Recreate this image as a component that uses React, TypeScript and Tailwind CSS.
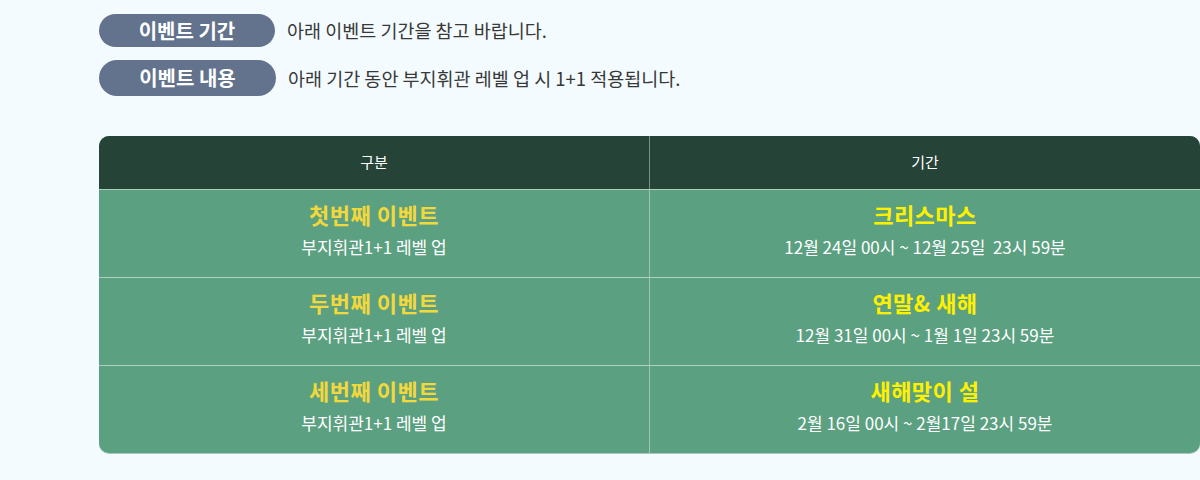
import React from "react";

const font = { fontFamily: '"Noto Sans CJK KR", "Noto Sans", sans-serif' };

const rows = [
  { l: "첫번째 이벤트", r: "크리스마스", d: "12월 24일 00시 ~ 12월 25일  23시 59분" },
  { l: "두번째 이벤트", r: "연말& 새해", d: "12월 31일 00시 ~ 1월 1일 23시 59분" },
  { l: "세번째 이벤트", r: "새해맞이 설", d: "2월 16일 00시 ~ 2월17일 23시 59분" },
];

export default function App() {
  return (
    <div className="w-[1200px] h-[480px] bg-[#f4fbfe] overflow-hidden" style={font}>
      <div className="pl-[99px] pt-[14px] flex flex-col gap-[13px]">
        <div className="flex items-center">
          <div className="w-[176px] h-[33px] rounded-full bg-[#63738d] text-white text-[20px] font-bold flex items-center justify-center leading-none">
            이벤트 기간
          </div>
          <div className="ml-[12px] text-[18.5px] text-[#383838] leading-none">아래 이벤트 기간을 참고 바랍니다.</div>
        </div>
        <div className="flex items-center">
          <div className="w-[177px] h-[36px] rounded-full bg-[#63738d] text-white text-[20px] font-bold flex items-center justify-center leading-none">
            이벤트 내용
          </div>
          <div className="ml-[12px] text-[18.5px] text-[#383838] leading-none">아래 기간 동안 부지휘관 레벨 업 시 1+1 적용됩니다.</div>
        </div>
      </div>
      <div className="ml-[99px] mt-[40px] w-[1101px] rounded-[10px] overflow-hidden bg-[#5ba080] shadow-[0_1px_0_#a9c8ba]">
        <div className="grid grid-cols-[550px_1px_550px] h-[53px] bg-[#264337] text-white text-[15px]">
          <div className="flex items-center justify-center">구분</div>
          <div className="bg-white/40" />
          <div className="flex items-center justify-center">기간</div>
        </div>
        {rows.map((row, i) => (
          <div key={i} className="grid grid-cols-[550px_1px_550px] h-[88px] border-t border-white/50">
            <div className="flex flex-col items-center pt-[11px]">
              <div className="text-[22px] font-bold text-[#f2d83c] leading-[26px] tracking-[0.5px]">{row.l}</div>
              <div className="text-[17px] text-white leading-[22px] mt-[9px]">부지휘관1+1 레벨 업</div>
            </div>
            <div className="bg-white/40" />
            <div className="flex flex-col items-center pt-[11px]">
              <div className="text-[22px] font-bold text-[#fff000] leading-[26px] tracking-[0.5px]">{row.r}</div>
              <div className="text-[17px] text-white leading-[22px] mt-[9px] whitespace-pre">{row.d}</div>
            </div>
          </div>
        ))}
      </div>
    </div>
  );
}
